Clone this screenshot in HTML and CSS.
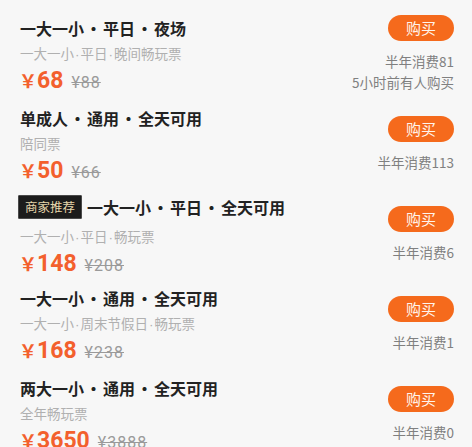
FILE: index.html
```html
<!DOCTYPE html>
<html lang="zh">
<head>
<meta charset="utf-8">
<link rel="stylesheet" href="styles.css">
</head>
<body>
<div class="list">
  <div class="row">
    <div class="info">
      <div class="title">一大一小<span class="dot">·</span>平日<span class="dot">·</span>夜场</div>
      <div class="sub">一大一小<span class="sdot">·</span>平日<span class="sdot">·</span>晚间畅玩票</div>
      <div class="price"><span class="now"><span class="yen">￥</span>68</span><span class="old">¥88</span></div>
    </div>
    <div class="side">
      <button class="buy">购买</button>
      <div class="stat">半年消费81</div>
      <div class="stat">5小时前有人购买</div>
    </div>
  </div>
  <div class="row">
    <div class="info">
      <div class="title">单成人<span class="dot">·</span>通用<span class="dot">·</span>全天可用</div>
      <div class="sub">陪同票</div>
      <div class="price"><span class="now"><span class="yen">￥</span>50</span><span class="old">¥66</span></div>
    </div>
    <div class="side">
      <button class="buy">购买</button>
      <div class="stat">半年消费113</div>
    </div>
  </div>
  <div class="row">
    <div class="info">
      <div class="title badged"><span class="badge">商家推荐</span>一大一小<span class="dot">·</span>平日<span class="dot">·</span>全天可用</div>
      <div class="sub">一大一小<span class="sdot">·</span>平日<span class="sdot">·</span>畅玩票</div>
      <div class="price"><span class="now"><span class="yen">￥</span>148</span><span class="old">¥208</span></div>
    </div>
    <div class="side">
      <button class="buy">购买</button>
      <div class="stat">半年消费6</div>
    </div>
  </div>
  <div class="row">
    <div class="info">
      <div class="title">一大一小<span class="dot">·</span>通用<span class="dot">·</span>全天可用</div>
      <div class="sub">一大一小<span class="sdot">·</span>周末节假日<span class="sdot">·</span>畅玩票</div>
      <div class="price"><span class="now"><span class="yen">￥</span>168</span><span class="old">¥238</span></div>
    </div>
    <div class="side">
      <button class="buy">购买</button>
      <div class="stat">半年消费1</div>
    </div>
  </div>
  <div class="row">
    <div class="info">
      <div class="title">两大一小<span class="dot">·</span>通用<span class="dot">·</span>全天可用</div>
      <div class="sub">全年畅玩票</div>
      <div class="price"><span class="now"><span class="yen">￥</span>3650</span><span class="old">¥3888</span></div>
    </div>
    <div class="side">
      <button class="buy">购买</button>
      <div class="stat">半年消费0</div>
    </div>
  </div>
</div>
</body>
</html>
```

FILE: styles.css
```css
html, body {
  margin: 0;
  padding: 0;
  background: #f7f7f7;
  overflow: hidden;
}
body {
  font-family: "Noto Sans CJK SC", "Noto Sans", sans-serif;
  width: 472px;
  height: 447px;
}
.list {
  padding: 9px 18px 0 20px;
}
.row {
  height: 90px;
  display: flex;
  align-items: center;
  justify-content: space-between;
}
.info {
  display: flex;
  flex-direction: column;
}
.title {
  font-size: 16px;
  font-weight: 700;
  color: #222;
  line-height: 24px;
  height: 24px;
  display: flex;
  align-items: center;
  white-space: nowrap;
}
.title.badged {
  height: 28px;
  margin-bottom: 2px;
}
.dot {
  display: inline-block;
  width: 19px;
  text-align: center;
}
.badge {
  display: inline-block;
  background: #1c1c1c;
  border: 1px solid #4a4a4a;
  color: #e6d6ab;
  font-size: 12.5px;
  font-weight: 400;
  line-height: 22px;
  height: 22px;
  padding: 0 6px;
  margin-left: -2px;
  margin-right: 5px;
  border-radius: 1px;
}
.sub {
  font-size: 13.5px;
  color: #b0b0b0;
  line-height: 26px;
  height: 26px;
  white-space: nowrap;
}
.sdot {
  font-family: "Liberation Sans", sans-serif;
  padding: 0 1px;
}
.price {
  line-height: 28px;
  height: 26px;
  display: flex;
  align-items: baseline;
  white-space: nowrap;
}
.now {
  color: #f3602d;
  font-family: "Roboto", "Liberation Sans", sans-serif;
  font-size: 23px;
  font-weight: 700;
}
.yen {
  font-family: "Noto Sans CJK SC", sans-serif;
  font-size: 18px;
  font-weight: 700;
  margin-left: -1px;
}
.old {
  color: #9a9a9a;
  font-family: "Roboto", "Liberation Sans", sans-serif;
  font-size: 16px;
  letter-spacing: 1px;
  margin-left: 8px;
  text-decoration: line-through;
}
.side {
  display: flex;
  flex-direction: column;
  align-items: flex-end;
}
.buy {
  width: 66px;
  height: 26px;
  border: none;
  border-radius: 13px;
  background: #f56a1c;
  color: #fff4ec;
  font-family: "Noto Sans CJK SC", sans-serif;
  font-size: 15px;
  padding: 0;
  margin-bottom: 10px;
  line-height: 26px;
}
.stat {
  font-size: 13.5px;
  color: #808080;
  line-height: 21px;
  white-space: nowrap;
}
```
